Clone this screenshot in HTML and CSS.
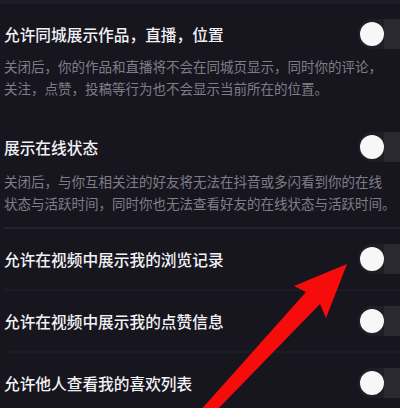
FILE: index.html
```html
<!DOCTYPE html>
<html lang="zh-CN">
<head>
  <meta charset="UTF-8">
  <meta name="viewport" content="width=device-width, initial-scale=1.0">
  <title>隐私设置</title>
  <link rel="stylesheet" href="styles.css">
</head>
<body>
  <div class="page">
    <div class="setting first">
      <div class="row">
        <span class="title">允许同城展示作品，直播，位置</span>
        <span class="switch"><span class="knob"></span></span>
      </div>
      <p class="desc">关闭后，你的作品和直播将不会在同城页显示，同时你的评论，<br>关注，点赞，投稿等行为也不会显示当前所在的位置。</p>
    </div>

    <div class="setting second">
      <div class="row">
        <span class="title">展示在线状态</span>
        <span class="switch"><span class="knob"></span></span>
      </div>
      <p class="desc">关闭后，与你互相关注的好友将无法在抖音或多闪看到你的在线<br>状态与活跃时间，同时你也无法查看好友的在线状态与活跃时间。</p>
    </div>

    <div class="item">
      <span class="title">允许在视频中展示我的浏览记录</span>
      <span class="switch"><span class="knob"></span></span>
    </div>
    <div class="item">
      <span class="title">允许在视频中展示我的点赞信息</span>
      <span class="switch"><span class="knob"></span></span>
    </div>
    <div class="item last">
      <span class="title">允许他人查看我的喜欢列表</span>
      <span class="switch"><span class="knob"></span></span>
    </div>
  </div>

  <svg class="arrow" viewBox="0 0 400 408" width="400" height="408">
    <polygon points="347,264 326,318 320,304 215,412 199,412 306,292 294,286" fill="#f70c0c"/>
  </svg>
</body>
</html>
```

FILE: styles.css
```css
body {
  margin: 0;
  background-color: #17161f;
  font-family: "Noto Sans CJK SC", "Noto Sans", sans-serif;
  overflow: hidden;
}

.page {
  position: relative;
  width: 400px;
  height: 408px;
  overflow: hidden;
  border-top: 4px solid #1e1d27;
  box-sizing: border-box;
  padding-left: 4px;
}

.row,
.item {
  display: flex;
  align-items: center;
  justify-content: space-between;
}

.row {
  height: 24px;
}

.title {
  color: #f2f2f4;
  font-size: 15.7px;
  font-weight: 500;
  white-space: nowrap;
}

.desc {
  margin: 0;
  color: #7f7e88;
  font-size: 13.5px;
  line-height: 21.5px;
  white-space: nowrap;
}

.setting.first {
  padding-top: 18px;
}

.setting.first .desc {
  margin-top: 10px;
}

.setting.second {
  padding-top: 36px;
  padding-bottom: 13px;
  border-bottom: 2px solid #25242e;
}

.setting.second .desc {
  margin-top: 12px;
}

.item {
  height: 60px;
  border-bottom: 2px solid #1d1c26;
}

.item.last {
  border-bottom: none;
}

.switch {
  position: relative;
  flex: none;
  width: 56px;
  height: 30px;
  margin-right: -14px;
  border-radius: 15px;
  background: linear-gradient(to right, #1f1e27 0, #1f1e27 26px, #2a2931 26px);
}

.knob {
  position: absolute;
  left: 2px;
  top: 3px;
  width: 24px;
  height: 24px;
  border-radius: 50%;
  background-color: #f7f7f7;
}

.arrow {
  position: absolute;
  left: 0;
  top: 0;
}
```
